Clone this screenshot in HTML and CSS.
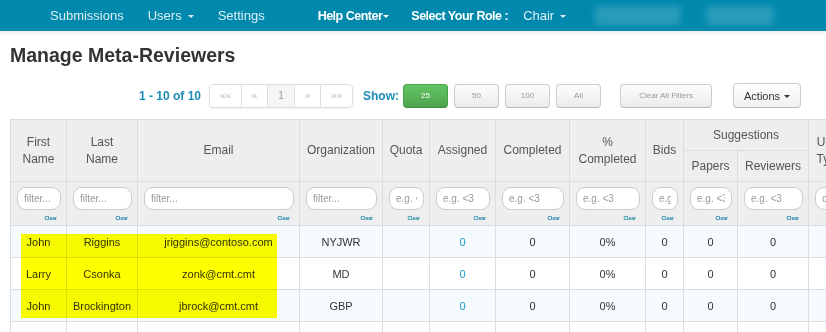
FILE: index.html
```html
<!DOCTYPE html>
<html lang="en">
<head>
  <meta charset="UTF-8">
  <meta name="viewport" content="width=device-width, initial-scale=1.0">
  <title>Manage Meta-Reviewers</title>
  <link rel="stylesheet" href="styles.css">
</head>
<body>

<nav class="topbar">
  <a href="#" class="nav-link">Submissions</a>
  <a href="#" class="nav-link nav-users">Users<span class="caret"></span></a>
  <a href="#" class="nav-link nav-settings">Settings</a>
  <a href="#" class="nav-link nav-strong nav-help">Help Center<span class="caret tight"></span></a>
  <span class="nav-strong nav-role">Select Your Role :</span>
  <a href="#" class="nav-link nav-chair">Chair<span class="caret"></span></a>
  <span class="blurred first"></span>
  <span class="blurred second"></span>
</nav>

<h1 class="page-title">Manage Meta-Reviewers</h1>

<div class="toolbar">
  <span class="count">1 - 10 of 10</span>
  <ul class="pager">
    <li class="wide">&laquo;&laquo;</li>
    <li>&laquo;</li>
    <li class="active">1</li>
    <li>&raquo;</li>
    <li class="wide">&raquo;&raquo;</li>
  </ul>
  <span class="show-label">Show:</span>
  <button class="btn btn-size btn-success">25</button>
  <button class="btn btn-size">50</button>
  <button class="btn btn-size">100</button>
  <button class="btn btn-size">All</button>
  <button class="btn btn-clear">Clear All Filters</button>
  <button class="btn btn-actions">Actions<span class="caret dark"></span></button>
</div>

<div class="grid-wrap">
  <table class="grid">
    <colgroup>
      <col style="width:56px"><col style="width:71px"><col style="width:162px"><col style="width:83px">
      <col style="width:47px"><col style="width:66px"><col style="width:74px"><col style="width:76px">
      <col style="width:38px"><col style="width:54px"><col style="width:71px"><col style="width:42px">
    </colgroup>
    <thead>
      <tr class="head-top">
        <th rowspan="2">First Name</th>
        <th rowspan="2">Last Name</th>
        <th rowspan="2">Email</th>
        <th rowspan="2">Organization</th>
        <th rowspan="2">Quota</th>
        <th rowspan="2">Assigned</th>
        <th rowspan="2">Completed</th>
        <th rowspan="2">% Completed</th>
        <th rowspan="2">Bids</th>
        <th colspan="2">Suggestions</th>
        <th rowspan="2">User Type</th>
      </tr>
      <tr class="head-sub">
        <th>Papers</th>
        <th>Reviewers</th>
      </tr>
      <tr class="filters">
        <td><input type="text" placeholder="filter..."><span class="clear">Clear</span></td>
        <td><input type="text" placeholder="filter..."><span class="clear">Clear</span></td>
        <td><input type="text" placeholder="filter..."><span class="clear">Clear</span></td>
        <td><input type="text" placeholder="filter..."><span class="clear">Clear</span></td>
        <td><input type="text" placeholder="e.g. <3"><span class="clear">Clear</span></td>
        <td><input type="text" placeholder="e.g. <3"><span class="clear">Clear</span></td>
        <td><input type="text" placeholder="e.g. <3"><span class="clear">Clear</span></td>
        <td><input type="text" placeholder="e.g. <3"><span class="clear">Clear</span></td>
        <td><input type="text" placeholder="e.g. <3"><span class="clear">Clear</span></td>
        <td><input type="text" placeholder="e.g. <3"><span class="clear">Clear</span></td>
        <td><input type="text" placeholder="e.g. <3"><span class="clear">Clear</span></td>
        <td><input type="text" placeholder="contains"><span class="clear">Clear</span></td>
      </tr>
    </thead>
    <tbody>
      <tr>
        <td>John</td><td>Riggins</td><td>jriggins@contoso.com</td><td>NYJWR</td><td></td>
        <td><a href="#" class="count-link">0</a></td><td>0</td><td>0%</td><td>0</td><td>0</td><td>0</td><td></td>
      </tr>
      <tr>
        <td>Larry</td><td>Csonka</td><td>zonk@cmt.cmt</td><td>MD</td><td></td>
        <td><a href="#" class="count-link">0</a></td><td>0</td><td>0%</td><td>0</td><td>0</td><td>0</td><td></td>
      </tr>
      <tr>
        <td>John</td><td>Brockington</td><td>jbrock@cmt.cmt</td><td>GBP</td><td></td>
        <td><a href="#" class="count-link">0</a></td><td>0</td><td>0%</td><td>0</td><td>0</td><td>0</td><td></td>
      </tr>
      <tr>
        <td></td><td></td><td></td><td></td><td></td><td></td><td></td><td></td><td></td><td></td><td></td><td></td>
      </tr>
    </tbody>
  </table>
  <div class="highlight"></div>
</div>

</body>
</html>
```

FILE: styles.css
```css
html, body {
  margin: 0;
  padding: 0;
  overflow: hidden;
}
body {
  font-family: "Liberation Sans", Arial, sans-serif;
  background-color: #fff;
  color: #333;
}

/* top navigation */
.topbar {
  display: flex;
  align-items: center;
  height: 31px;
  padding-left: 50px;
  background-color: #0089ad;
  box-shadow: 0px 2px 3px rgba(0,0,0,0.08);
  font-size: 13px;
}
.nav-link {
  color: #dceef4;
  text-decoration: none;
}
.nav-strong {
  color: #fff;
  font-weight: bold;
  font-size: 12.5px;
  letter-spacing: -0.5px;
}
.nav-users { margin-left: 24px; }
.nav-settings { margin-left: 24px; }
.nav-help { margin-left: 53px; }
.nav-role { margin-left: 22px; }
.nav-chair { margin-left: 15px; }
.caret {
  display: inline-block;
  width: 0;
  height: 0;
  margin-left: 6px;
  vertical-align: middle;
  border-top: 3px solid;
  border-left: 3px solid transparent;
  border-right: 3px solid transparent;
}
.caret.tight { margin-left: 1px; }
.blurred {
  display: block;
  height: 19px;
  background-color: rgba(255,255,255,0.16);
  border-radius: 4px;
  filter: blur(3px);
}
.blurred.first { width: 86px; margin-left: 29px; }
.blurred.second { width: 68px; margin-left: 25px; }

/* page heading */
.page-title {
  margin: 12px 0 0 10px;
  font-size: 19.5px;
  line-height: 24px;
  font-weight: bold;
  color: #333;
}

/* toolbar */
.toolbar {
  display: flex;
  align-items: center;
  height: 25px;
  margin-top: 16px;
  padding-left: 139px;
}
.count {
  font-size: 12px;
  font-weight: bold;
  color: #1c8cb8;
}
.pager {
  display: flex;
  margin: 0 0 0 8px;
  padding: 0;
  list-style: none;
  border: 1px solid #ddd;
  border-radius: 4px;
  box-shadow: 0px 1px 2px rgba(0,0,0,0.05);
}
.pager li {
  width: 25px;
  height: 22px;
  line-height: 22px;
  text-align: center;
  font-size: 10px;
  color: #bbb;
}
.pager li + li {
  border-left: 1px solid #ddd;
}
.pager li.wide { width: 31px; }
.pager li.active {
  width: 26px;
  background-color: #f5f5f5;
  color: #999;
}
.show-label {
  margin-left: 10px;
  font-size: 12px;
  font-weight: bold;
  color: #1c8cb8;
}
.btn {
  font-family: "Liberation Sans", Arial, sans-serif;
  height: 24px;
  padding: 0;
  border: 1px solid #ccc;
  border-bottom-color: #b8b8b8;
  border-radius: 4px;
  background: linear-gradient(#fdfdfd, #ebebeb);
  color: #999;
  font-size: 8px;
  cursor: pointer;
}
.btn-size {
  width: 45px;
  margin-left: 6px;
}
.btn-success {
  margin-left: 4px;
  background: linear-gradient(#62c462, #4fa24f);
  border-color: #46a046;
  border-bottom-color: #3b8a3b;
  color: #fff;
}
.btn-clear {
  width: 92px;
  margin-left: 19px;
}
.btn-actions {
  width: 68px;
  height: 25px;
  margin-left: 21px;
  color: #333;
  font-size: 11px;
  background: linear-gradient(#fff, #f0f0f0);
}
.caret.dark {
  margin-left: 4px;
  color: #333;
}

/* grid */
.grid-wrap {
  position: relative;
  margin: 11px 0 0 10px;
}
.grid {
  border-collapse: collapse;
  table-layout: fixed;
  width: 840px;
  font-size: 11px;
}
.grid th,
.grid td {
  border: 1px solid #ddd;
  text-align: center;
  vertical-align: middle;
  overflow: hidden;
}
.grid th {
  height: 30px;
  padding: 0 6px;
  background-color: #eee;
  color: #555;
  font-size: 12px;
  font-weight: normal;
  line-height: 17px;
}
.filters td {
  height: 44px;
  padding: 5px 5px 0 6px;
  box-sizing: border-box;
  vertical-align: top;
  background-color: #eee;
}
.filters input {
  display: block;
  box-sizing: border-box;
  width: 100%;
  height: 23px;
  margin: 0;
  padding: 0 6px;
  border: 1px solid #ccc;
  border-radius: 9px;
  background-color: #fff;
  font-family: "Liberation Sans", Arial, sans-serif;
  font-size: 10px;
  outline: none;
}
.filters input::placeholder {
  color: #999;
}
.clear {
  display: block;
  margin-top: 5px;
  padding-right: 4px;
  text-align: right;
  font-size: 5px;
  line-height: 6px;
  font-weight: bold;
  color: #1a82a8;
}
.grid tbody td {
  height: 31px;
  padding: 0 4px;
  color: #333;
}
.grid tbody tr:nth-child(odd) td {
  background-color: #f5faff;
}
.count-link {
  color: #1a9bc7;
  text-decoration: none;
}
.highlight {
  position: absolute;
  left: 11px;
  top: 115px;
  width: 256px;
  height: 84px;
  background-color: #ffff00;
  mix-blend-mode: multiply;
}
```
